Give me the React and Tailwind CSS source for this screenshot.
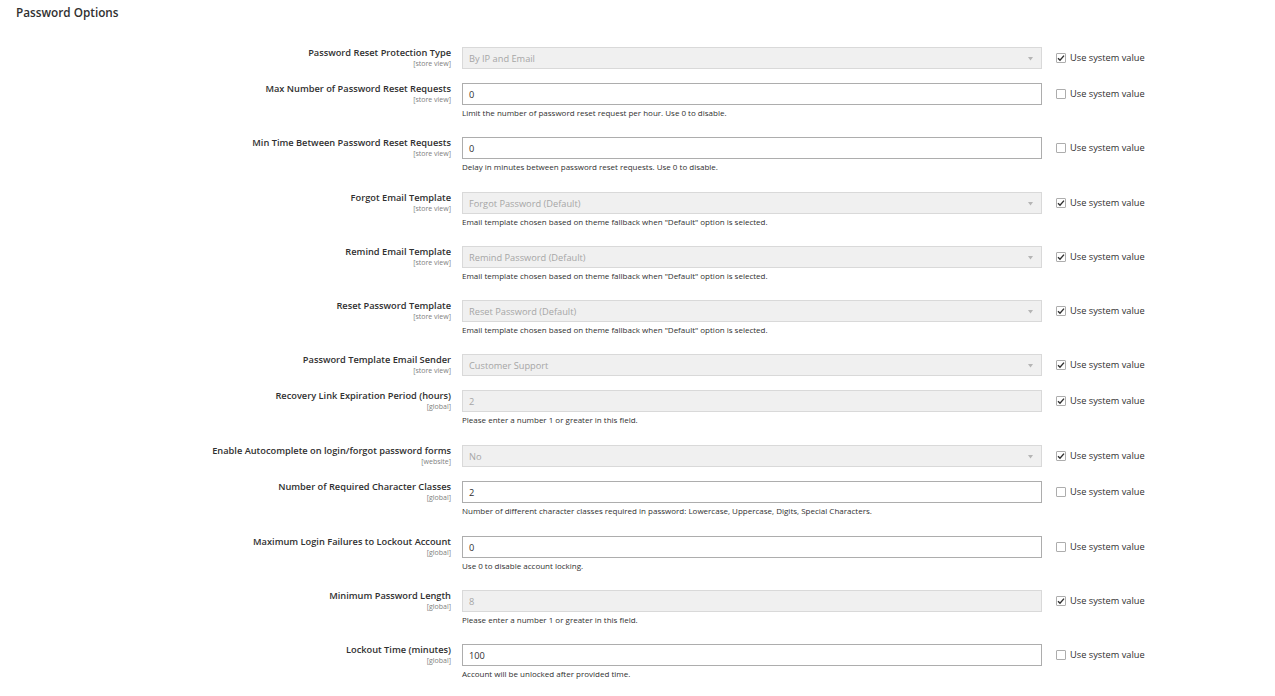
import React from "react";

const fields = [
  { label: "Password Reset Protection Type", scope: "[store view]", value: "By IP and Email", type: "select", inherit: true },
  { label: "Max Number of Password Reset Requests", scope: "[store view]", value: "0", type: "text", inherit: false, note: "Limit the number of password reset request per hour. Use 0 to disable." },
  { label: "Min Time Between Password Reset Requests", scope: "[store view]", value: "0", type: "text", inherit: false, note: "Delay in minutes between password reset requests. Use 0 to disable.", extra: true },
  { label: "Forgot Email Template", scope: "[store view]", value: "Forgot Password (Default)", type: "select", inherit: true, note: 'Email template chosen based on theme fallback when "Default" option is selected.' },
  { label: "Remind Email Template", scope: "[store view]", value: "Remind Password (Default)", type: "select", inherit: true, note: 'Email template chosen based on theme fallback when "Default" option is selected.' },
  { label: "Reset Password Template", scope: "[store view]", value: "Reset Password (Default)", type: "select", inherit: true, note: 'Email template chosen based on theme fallback when "Default" option is selected.' },
  { label: "Password Template Email Sender", scope: "[store view]", value: "Customer Support", type: "select", inherit: true },
  { label: "Recovery Link Expiration Period (hours)", scope: "[global]", value: "2", type: "text", inherit: true, note: "Please enter a number 1 or greater in this field.", extra: true },
  { label: "Enable Autocomplete on login/forgot password forms", scope: "[website]", value: "No", type: "select", inherit: true },
  { label: "Number of Required Character Classes", scope: "[global]", value: "2", type: "text", inherit: false, note: "Number of different character classes required in password: Lowercase, Uppercase, Digits, Special Characters.", extra: true },
  { label: "Maximum Login Failures to Lockout Account", scope: "[global]", value: "0", type: "text", inherit: false, note: "Use 0 to disable account locking." },
  { label: "Minimum Password Length", scope: "[global]", value: "8", type: "text", inherit: true, note: "Please enter a number 1 or greater in this field." },
  { label: "Lockout Time (minutes)", scope: "[global]", value: "100", type: "text", inherit: false, note: "Account will be unlocked after provided time." },
];

function Checkbox({ checked }) {
  return (
    <span className="flex h-[10px] w-[10px] items-center justify-center rounded-[1px] border border-[#adadad] bg-white">
      {checked && (
        <svg width="8" height="8" viewBox="0 0 8 8" fill="none">
          <path d="M1 4.2 L3 6.2 L7 1.6" stroke="#303030" strokeWidth="1.4" />
        </svg>
      )}
    </span>
  );
}

function Control({ field }) {
  const disabled = field.inherit;
  return (
    <div
      className={
        "flex h-[22px] w-[580px] items-center justify-between border pl-[6px] pr-[8px] pt-[1px] text-[9.25px] " +
        (disabled
          ? "border-[#d9d9d9] bg-[#f0f0f0] text-[#a6a6a6]"
          : "border-[#adadad] bg-white text-[#303030]")
      }
    >
      <span>{field.value}</span>
      {field.type === "select" && (
        <svg width="5" height="4" viewBox="0 0 5 4">
          <path d="M0 0 H5 L2.5 3.5 Z" fill="#b5b5b5" />
        </svg>
      )}
    </div>
  );
}

function Row({ field }) {
  return (
    <div className={"flex " + (field.extra ? "pb-[15px]" : "pb-[14px]")}>
      <div className="w-[451px] text-right">
        <div className="text-[9.25px] font-semibold leading-[12px] text-[#303030]">{field.label}</div>
        <div className="mt-[1px] text-[7px] leading-[7px] text-[#808080]">{field.scope}</div>
      </div>
      <div className="ml-[11px] w-[580px]">
        <Control field={field} />
        {field.note && (
          <div className="h-[18px] pt-[2px] text-[8px] leading-[12px] text-[#303030]">{field.note}</div>
        )}
      </div>
      <div className="ml-[14px] flex h-[22px] items-center gap-[4px] pb-[1px]">
        <Checkbox checked={field.inherit} />
        <span className="text-[9.25px] text-[#303030]">Use system value</span>
      </div>
    </div>
  );
}

export default function App() {
  return (
    <div
      className="h-[696px] w-full overflow-hidden bg-white"
      style={{ fontFamily: '"Open Sans", "Liberation Sans", sans-serif' }}
    >
      <div className="px-[16px] pt-[4px] text-[11.75px] font-semibold leading-[16px] text-[#303030]">Password Options</div>
      <div className="mt-[27px]">
        {fields.map((f) => (
          <Row key={f.label} field={f} />
        ))}
      </div>
    </div>
  );
}
